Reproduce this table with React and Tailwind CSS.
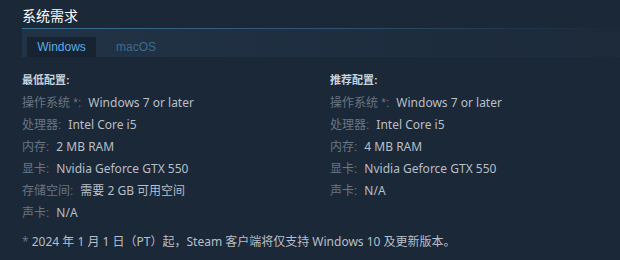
const minimum = [
  ['操作系统 *:', 'Windows 7 or later'],
  ['处理器:', 'Intel Core i5'],
  ['内存:', '2 MB RAM'],
  ['显卡:', 'Nvidia Geforce GTX 550'],
  ['存储空间:', '需要 2 GB 可用空间'],
  ['声卡:', 'N/A'],
];

const recommended = [
  ['操作系统 *:', 'Windows 7 or later'],
  ['处理器:', 'Intel Core i5'],
  ['内存:', '4 MB RAM'],
  ['显卡:', 'Nvidia Geforce GTX 550'],
  ['声卡:', 'N/A'],
];

function SpecList({ title, items }) {
  return (
    <div>
      <div className="h-[18px] text-[11px] font-bold leading-[18px] text-[#c6d4df]">{title}</div>
      <ul className="mt-[3px]">
        {items.map(([label, value]) => (
          <li key={label} className="flex h-[22px] items-center gap-[7px] text-[12px]">
            <span className="text-[#6a7682]">{label}</span>
            <span className="font-['Noto_Sans','Noto_Sans_CJK_SC',sans-serif] text-[#b8bfc6]">{value}</span>
          </li>
        ))}
      </ul>
    </div>
  );
}

export default function App() {
  return (
    <div
      className="h-[260px] w-[620px] overflow-hidden bg-[#1b2838] pl-[22px]"
      style={{ fontFamily: '"Liberation Sans", Arial, "Noto Sans CJK SC", sans-serif' }}
    >
      {/* Heading */}
      <h2 className="h-[28px] pt-[7px] text-[14px] leading-[18px] text-white">系统需求</h2>

      {/* Tabs */}
      <div className="h-px bg-gradient-to-r from-[#3b6f92] via-[#2d5571] to-transparent" />
      <div className="flex h-[28px] items-end bg-gradient-to-r from-[#213346] to-[#1c2a3a] pl-[5px]">
        <div className="flex h-[20px] w-[69px] items-center justify-center bg-[#172331] text-[12px] text-[#5dade8]">
          Windows
        </div>
        <div className="flex h-[20px] items-center pl-[20px] text-[12px] text-[#3f6b8e]">macOS</div>
      </div>

      {/* Specs */}
      <div className="mt-[14px] flex">
        <div className="w-[308px]">
          <SpecList title="最低配置:" items={minimum} />
        </div>
        <div className="flex-1">
          <SpecList title="推荐配置:" items={recommended} />
        </div>
      </div>

      {/* Note */}
      <p className="mt-[9px] font-['Noto_Sans','Noto_Sans_CJK_SC',sans-serif] text-[12px] leading-[18px] text-[#b8bfc6]">
        <span className="text-[#6a7682]">*</span> 2024 年 1 月 1 日（PT）起，Steam 客户端将仅支持 Windows 10 及更新版本。
      </p>
    </div>
  );
}
